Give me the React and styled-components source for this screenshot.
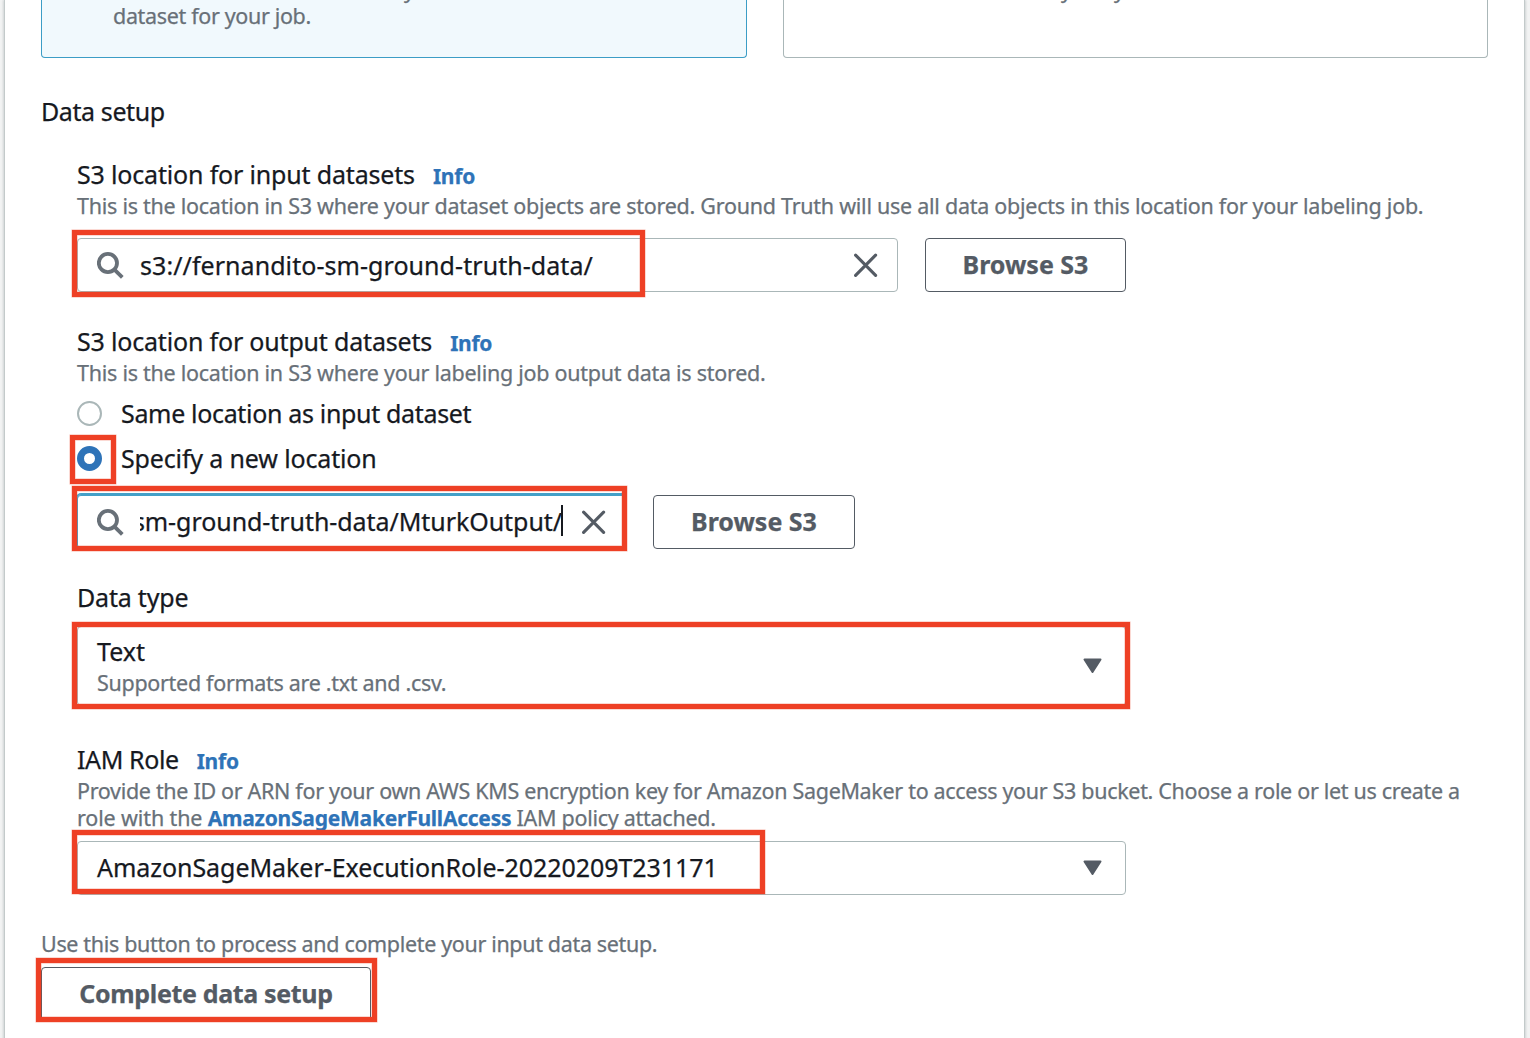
import React from "react";
import styled, { createGlobalStyle } from "styled-components";

const Global = createGlobalStyle`
  * { box-sizing: border-box; }
  body {
    margin: 0; background: #f2f3f3; color: #16191f; overflow: hidden;
    font-family: "Noto Sans", "Open Sans", sans-serif; -webkit-text-stroke: 0.25px;
  }
`;

const Page = styled.div`
  height: 1038px;
  overflow: hidden;
  padding: 0 5px 0 4px;
`;
const Card = styled.main`
  height: 1038px;
  padding: 0 36px;
  background: #fff;
  border: solid #c3caca;
  border-width: 0 1px;
  box-shadow: 0 1px 2px 1px rgba(0, 28, 36, 0.14);
`;
const Tiles = styled.div`
  display: grid;
  grid-template-columns: 706px 705px;
  gap: 36px;
`;
const Tile = styled.div`
  height: 58px;
  overflow: hidden;
  padding: 2px 36px 0 71px;
  border: 1px solid ${(p) => (p.$on ? "#3c9dc6" : "#aab7b8")};
  border-top: 0;
  border-radius: 0 0 4px 4px;
  background: ${(p) => (p.$on ? "#f1f9fd" : "#fff")};
`;
const T = styled.span`
  letter-spacing: ${(p) => p.$ls || 0}px;
  white-space: pre;
`;
const Body = styled.div`
  margin-top: ${(p) => p.$top || 0}px;
  font-size: 21.5px;
  line-height: 27px;
  color: #687078;
  white-space: nowrap;
`;
const CutLine = styled(Body)`
  display: flex;
  gap: 42px;
  margin-top: -26px;
  margin-bottom: -1px;
  padding-left: ${(p) => p.$x}px;
`;
const Heading = styled.h2`
  margin: 38px 0 0;
  font-size: 25px;
  font-weight: 400;
  line-height: 30px;
`;
const Fields = styled.div`
  padding-left: 36px;
`;
const Label = styled.div`
  display: flex;
  align-items: baseline;
  gap: 18px;
  height: 30px;
  margin-top: ${(p) => p.$top}px;
  margin-bottom: 3px;
  font-size: 25px;
  line-height: 30px;
  white-space: nowrap;
`;
const Link = styled.a`
  font-size: 21px;
  font-weight: 700;
  letter-spacing: -0.24px;
  color: #2e73b8;
`;
const Row = styled.div`
  position: relative;
  display: flex;
  align-items: flex-start;
  gap: 27px;
  margin-top: ${(p) => p.$top}px;
`;
const Box = styled.div`
  display: flex;
  align-items: center;
  width: ${(p) => p.$w}px;
  height: ${(p) => p.$h || 54}px;
  padding: 0 19px;
  border: 1px solid #aab7b8;
  border-radius: 4px;
  background: #fff;
  font-size: 25px;
  line-height: 30px;
  white-space: nowrap;
  ${(p) => p.$focus && "border-color: #44a0c8; box-shadow: 0 0 0 1px #44a0c8, inset 0 1px 0 #44a0c8;"}
`;
const Value = styled.div`
  flex: 1;
  display: flex;
  align-items: center;
  min-width: 0;
  overflow: hidden;
  margin-left: 16px;
  margin-right: ${(p) => (p.$end ? 19 : 18)}px;
  padding-bottom: ${(p) => (p.$end ? 2 : 0)}px;
  line-height: 36px;
  justify-content: ${(p) => (p.$end ? "flex-end" : "flex-start")};
`;
const Caret = styled.i`
  flex: none;
  width: 2px;
  height: 31px;
  margin-left: -1px;
  background: #16191f;
`;
const Button = styled.button`
  width: ${(p) => p.$w}px;
  height: 54px;
  margin-top: ${(p) => p.$top || 0}px;
  padding: 0 0 2px;
  border: 1px solid #545b64;
  border-radius: 4px;
  background: #fff;
  font: 700 25px/30px "Noto Sans", "Open Sans", sans-serif;
  color: #545b64;
  white-space: nowrap;
`;
const Option = styled.div`
  position: relative;
  display: flex;
  align-items: center;
  gap: 19px;
  height: 30px;
  margin-top: ${(p) => p.$top}px;
  font-size: 25px;
  line-height: 30px;
`;
const Radio = styled.span`
  width: 25px;
  height: 25px;
  border-radius: 50%;
  background: #fff;
  border: ${(p) => (p.$on ? "7.5px solid #2e73b8" : "2px solid #aab7b8")};
`;
const Choice = styled.div`
  flex: 1;
  padding-bottom: ${(p) => p.$lift || 0}px;
`;
const Mark = styled.span`
  position: absolute;
  left: ${(p) => p.$x}px;
  top: ${(p) => p.$y}px;
  width: ${(p) => p.$w}px;
  height: ${(p) => p.$h}px;
  border: 5px solid #ee4025;
  box-shadow: 0 0 0 0.5px rgba(238, 64, 37, 0.4), inset 0 0 0 0.5px rgba(238, 64, 37, 0.4);
  pointer-events: none;
`;
const SearchSvg = styled.svg`
  flex: none;
  margin-top: 2px;
`;
const CloseSvg = styled.svg`
  flex: none;
`;
const ArrowSvg = styled.svg`
  flex: none;
  margin: 0 4px 0 0;
`;

const Search = () => (
  <SearchSvg width="27" height="28" viewBox="0 0 27 28" fill="none" stroke="#687078" strokeWidth="3.8">
    <circle cx="10.9" cy="11" r="9.1" />
    <path d="M17.2 17.4 25.3 25.4" />
  </SearchSvg>
);
const Close = () => (
  <CloseSvg width="24" height="26" viewBox="0 0 24 26" fill="none" stroke="#545b64" strokeWidth="3.1" strokeLinecap="round">
    <path d="M1.6 3.2 21.6 23.4M21.6 3.2 1.6 23.4" />
  </CloseSvg>
);
const Arrow = () => (
  <ArrowSvg width="19" height="16" viewBox="0 0 19 16" fill="#545b64" stroke="#545b64" strokeWidth="2" strokeLinejoin="round">
    <path d="M1.5 1.5H17.5L9.5 14Z" />
  </ArrowSvg>
);

export default function App() {
  return (
    <Page>
      <Global />
      <Card>
        <Tiles>
          <Tile $on>
            <CutLine $x={291}><span>y</span></CutLine>
            <Body><T $ls={-0.34}>dataset for your job.</T></Body>
          </Tile>
          <Tile>
            <CutLine $x={206}><span>y</span><span>y</span></CutLine>
          </Tile>
        </Tiles>
        <Heading><T $ls={-0.4}>Data setup</T></Heading>
        <Fields>
          <Label $top={33}><T $ls={-0.17}>S3 location for input datasets</T><Link>Info</Link></Label>
          <Body><T $ls={-0.26}>This is the location in S3 where your dataset objects are stored. Ground Truth will use all data objects in this location for your labeling job.</T></Body>
          <Row $top={19}>
            <Box $w={821}><Search /><Value><T $ls={0.06}>s3://fernandito-sm-ground-truth-data/</T></Value><Close /></Box>
            <Button $w={201}><T>Browse S3</T></Button>
            <Mark $x={-5} $y={-8} $w={573} $h={67} />
          </Row>
          <Label $top={34}><T $ls={-0.18}>S3 location for output datasets</T><Link>Info</Link></Label>
          <Body><T $ls={-0.26}>This is the location in S3 where your labeling job output data is stored.</T></Body>
          <Option $top={12}><Radio /><T $ls={-0.33}>Same location as input dataset</T></Option>
          <Option $top={15}>
            <Radio $on /><T $ls={-0.15}>Specify a new location</T>
            <Mark $x={-7} $y={-8} $w={46} $h={49} />
          </Option>
          <Row $top={21}>
            <Box $w={549} $h={55} $focus>
              <Search />
              <Value $end><T $ls={-0.06}>sm-ground-truth-data/MturkOutput/</T><Caret /></Value>
              <Close />
            </Box>
            <Button $w={202} $top={1}><T>Browse S3</T></Button>
            <Mark $x={-5} $y={-8} $w={555} $h={65} />
          </Row>
          <Label $top={33}><T $ls={-0.2}>Data type</T></Label>
          <Row $top={14}>
            <Box $w={1049} $h={80}>
              <Choice><T>Text</T><Body $top={3}><T $ls={-0.3}>Supported formats are .txt and .csv.</T></Body></Choice>
              <Arrow />
            </Box>
            <Mark $x={-5} $y={-4} $w={1058} $h={87} />
          </Row>
          <Label $top={38}><T $ls={-0.4}>IAM Role</T><Link>Info</Link></Label>
          <Body><T $ls={-0.315}>Provide the ID or ARN for your own AWS KMS encryption key for Amazon SageMaker to access your S3 bucket. Choose a role or let us create a</T></Body>
          <Body><T $ls={-0.13}>role with the </T><Link>AmazonSageMakerFullAccess</Link><T $ls={-0.28}> IAM policy attached.</T></Body>
          <Row $top={9}>
            <Box $w={1049}><Choice $lift={2}><T $ls={-0.05}>AmazonSageMaker-ExecutionRole-20220209T231171</T></Choice><Arrow /></Box>
            <Mark $x={-5} $y={-11} $w={693} $h={64} />
          </Row>
        </Fields>
        <Body $top={35}><T $ls={-0.34}>Use this button to process and complete your input data setup.</T></Body>
        <Row $top={10}>
          <Button $w={330}><T $ls={-0.35}>Complete data setup</T></Button>
          <Mark $x={-5} $y={-9} $w={341} $h={64} />
        </Row>
      </Card>
    </Page>
  );
}
